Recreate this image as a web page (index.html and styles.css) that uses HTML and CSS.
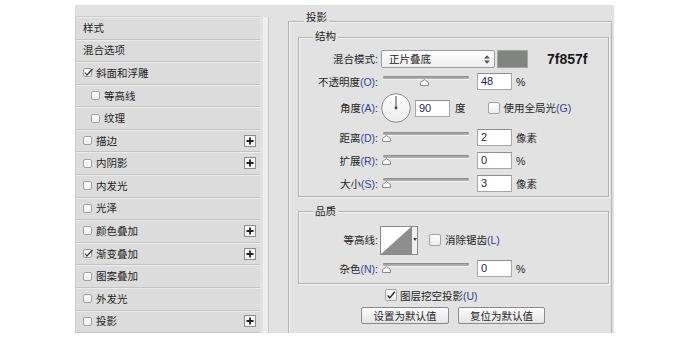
FILE: index.html
```html
<!DOCTYPE html>
<html lang="zh">
<head>
<meta charset="utf-8">
<title>图层样式 - 投影</title>
<link rel="stylesheet" href="styles.css">
</head>
<body>
<div class="dialog">
  <div class="side">
    <ul class="list">
      <li class="row">样式</li>
      <li class="row">混合选项</li>
      <li class="row"><svg class="cbs" width="11" height="10" viewBox="0 0 11 10"><rect x="0.5" y="0.5" width="8" height="8" rx="1.5" fill="#fff" stroke="#9a9a9a"/><path d="M2 4.5 L4 7 L9.5 1" fill="none" stroke="#333" stroke-width="1.2"/></svg>斜面和浮雕</li>
      <li class="row sub"><span class="cb"></span>等高线</li>
      <li class="row sub"><span class="cb"></span>纹理</li>
      <li class="row"><span class="cb"></span>描边<span class="plus"><svg width="8" height="8" viewBox="0 0 8 8"><path d="M4 0.5v7M0.5 4h7" stroke="#222" stroke-width="1.8"/></svg></span></li>
      <li class="row"><span class="cb"></span>内阴影<span class="plus"><svg width="8" height="8" viewBox="0 0 8 8"><path d="M4 0.5v7M0.5 4h7" stroke="#222" stroke-width="1.8"/></svg></span></li>
      <li class="row"><span class="cb"></span>内发光</li>
      <li class="row"><span class="cb"></span>光泽</li>
      <li class="row"><span class="cb"></span>颜色叠加<span class="plus"><svg width="8" height="8" viewBox="0 0 8 8"><path d="M4 0.5v7M0.5 4h7" stroke="#222" stroke-width="1.8"/></svg></span></li>
      <li class="row"><svg class="cbs" width="11" height="10" viewBox="0 0 11 10"><rect x="0.5" y="0.5" width="8" height="8" rx="1.5" fill="#fff" stroke="#9a9a9a"/><path d="M2 4.5 L4 7 L9.5 1" fill="none" stroke="#333" stroke-width="1.2"/></svg>渐变叠加<span class="plus"><svg width="8" height="8" viewBox="0 0 8 8"><path d="M4 0.5v7M0.5 4h7" stroke="#222" stroke-width="1.8"/></svg></span></li>
      <li class="row"><span class="cb"></span>图案叠加</li>
      <li class="row"><span class="cb"></span>外发光</li>
      <li class="row"><span class="cb"></span>投影<span class="plus"><svg width="8" height="8" viewBox="0 0 8 8"><path d="M4 0.5v7M0.5 4h7" stroke="#222" stroke-width="1.8"/></svg></span></li>
    </ul>
    <div class="track"></div>
  </div>

  <div class="main">
    <div class="outer">
      <div class="legend">投影</div>

      <div class="box struct">
        <div class="legend">结构</div>

        <div class="frow r1">
          <span class="lbl">混合模式:</span>
          <div class="select"><span>正片叠底</span><svg width="6" height="9" viewBox="0 0 6 9"><path d="M0 3.6 L3 0.3 L6 3.6Z M0 5.4 L3 8.7 L6 5.4Z" fill="#555"/></svg></div>
          <span class="swatch"></span>
          <span class="hex">7f857f</span>
        </div>

        <div class="frow r2">
          <span class="lbl">不透明度<span class="key">(O)</span>:</span>
          <div class="slider"><span class="bar"></span><svg class="thumb" style="left:37px" width="9" height="7" viewBox="0 0 9 7"><path d="M0.5 6.5 V3.5 L4.5 0.6 L8.5 3.5 V6.5Z" fill="#fafafa" stroke="#8a8a8a"/></svg></div>
          <span class="input">48</span>
          <span class="unit">%</span>
        </div>

        <div class="frow r3">
          <span class="lbl">角度<span class="key">(A)</span>:</span>
          <svg class="dial" width="30" height="30" viewBox="0 0 30 30"><defs><linearGradient id="dg" x1="0" y1="0" x2="0" y2="1"><stop offset="0" stop-color="#ffffff"/><stop offset="1" stop-color="#ececec"/></linearGradient></defs><circle cx="15" cy="15" r="14.3" fill="url(#dg)" stroke="#8c8c8c"/><path d="M15 15 V3" stroke="#444" stroke-width="1"/><circle cx="15" cy="15" r="1.4" fill="#444"/></svg>
          <span class="input deginput">90</span>
          <span class="deg">度</span>
          <span class="check gl"></span>
          <span class="ctext">使用全局光<span class="key">(G)</span></span>
        </div>

        <div class="frow">
          <span class="lbl">距离<span class="key">(D)</span>:</span>
          <div class="slider"><span class="bar"></span><svg class="thumb" style="left:-1px" width="9" height="7" viewBox="0 0 9 7"><path d="M0.5 6.5 V3.5 L4.5 0.6 L8.5 3.5 V6.5Z" fill="#fafafa" stroke="#8a8a8a"/></svg></div>
          <span class="input">2</span>
          <span class="unit">像素</span>
        </div>

        <div class="frow">
          <span class="lbl">扩展<span class="key">(R)</span>:</span>
          <div class="slider"><span class="bar"></span><svg class="thumb" style="left:-1px" width="9" height="7" viewBox="0 0 9 7"><path d="M0.5 6.5 V3.5 L4.5 0.6 L8.5 3.5 V6.5Z" fill="#fafafa" stroke="#8a8a8a"/></svg></div>
          <span class="input">0</span>
          <span class="unit">%</span>
        </div>

        <div class="frow">
          <span class="lbl">大小<span class="key">(S)</span>:</span>
          <div class="slider"><span class="bar"></span><svg class="thumb" style="left:-1px" width="9" height="7" viewBox="0 0 9 7"><path d="M0.5 6.5 V3.5 L4.5 0.6 L8.5 3.5 V6.5Z" fill="#fafafa" stroke="#8a8a8a"/></svg></div>
          <span class="input">3</span>
          <span class="unit">像素</span>
        </div>
      </div>

      <div class="box quality">
        <div class="legend">品质</div>

        <div class="frow q1">
          <span class="lbl">等高线:</span>
          <div class="contour">
            <span class="cbox"><svg width="30" height="27" viewBox="0 0 30 27"><path d="M0 27 L30 0 V27Z" fill="#8e8e8e"/></svg></span>
            <span class="drop"><svg width="4" height="3" viewBox="0 0 4 3"><path d="M0 0 H4 L2 3Z" fill="#444"/></svg></span>
          </div>
          <span class="check aa"></span>
          <span class="ctext">消除锯齿<span class="key">(L)</span></span>
        </div>

        <div class="frow q2">
          <span class="lbl">杂色<span class="key">(N)</span>:</span>
          <div class="slider"><span class="bar"></span><svg class="thumb" style="left:-1px" width="9" height="7" viewBox="0 0 9 7"><path d="M0.5 6.5 V3.5 L4.5 0.6 L8.5 3.5 V6.5Z" fill="#fafafa" stroke="#8a8a8a"/></svg></div>
          <span class="input">0</span>
          <span class="unit">%</span>
        </div>
      </div>

      <div class="knock">
        <span class="check on"><svg width="12" height="11" viewBox="0 0 12 11"><path d="M2 5.5 L4.5 8.5 L10.5 1" fill="none" stroke="#222" stroke-width="1.6"/></svg></span>
        <span class="ctext">图层挖空投影<span class="key">(U)</span></span>
      </div>

      <div class="btns">
        <span class="btn b1">设置为默认值</span>
        <span class="btn b2">复位为默认值</span>
      </div>
    </div>
  </div>
</div>
</body>
</html>
```

FILE: styles.css
```css
* { box-sizing: border-box; }

body {
  margin: 0;
  background: #ffffff;
  font-family: "Liberation Sans", "Noto Sans CJK SC", sans-serif;
  font-size: 10.5px;
  color: #1e1e1e;
}

.dialog {
  margin: 5px 0 0 75px;
  width: 539px;
  height: 328px;
  background: #e2e2e2;
  display: flex;
}

/* ---------- left style list ---------- */
.side {
  width: 195px;
  flex: none;
  display: flex;
  padding-top: 11px;
}

.list {
  list-style: none;
  margin: 0;
  padding: 0;
  width: 185px;
  display: flex;
  flex-direction: column;
  border-top: 1px solid #cdcdcd;
  border-left: 1px solid #cdcdcd;
}

.row {
  flex: 1;
  display: flex;
  align-items: center;
  padding-left: 7px;
  background: #dcdcdc;
  border-bottom: 1px solid #c4c4c4;
  box-shadow: inset 0 1px 0 #ececec;
  line-height: 14px;
}

.row.sub { padding-left: 15px; }

.cb {
  width: 9px;
  height: 9px;
  flex: none;
  border: 1px solid #a2a2a2;
  border-radius: 2px;
  background: linear-gradient(#ffffff, #efefef);
  margin-right: 4px;
}

.cbs {
  flex: none;
  margin-right: 2px;
}

.plus {
  margin-left: auto;
  margin-right: 4px;
  width: 12px;
  height: 12px;
  border: 1px solid #8c8c8c;
  background: #f6f6f6;
  display: flex;
  align-items: center;
  justify-content: center;
}

.track {
  width: 6px;
  margin-left: 3px;
  margin-top: 1px;
  background: #eeeeee;
  border-right: 1px solid #c6c6c6;
}

/* ---------- right settings ---------- */
.main {
  flex: 1;
  display: flex;
  padding: 16px 0 0 18px;
}

.outer {
  width: 324px;
  border: 1px solid #b2b2b2;
  border-bottom: none;
  box-shadow: inset 1px 1px 0 #f3f3f3;
}

.legend {
  width: max-content;
  line-height: 14px;
  background: #e2e2e2;
  padding: 0 2px;
}

.outer > .legend { margin: -12px 0 0 15px; }

.box {
  border: 1px solid #b2b2b2;
  box-shadow: inset 1px 1px 0 #f3f3f3, 1px 1px 0 #f3f3f3;
  margin: 13px 2px 0 9px;
}

.struct { padding-bottom: 4px; }
.struct > .legend { margin: -9px 0 0 14px; }

.quality { margin-top: 14px; padding-bottom: 6px; }
.quality > .legend { margin: -8px 0 0 14px; }

.frow {
  display: flex;
  align-items: center;
  height: 17px;
  margin-top: 6px;
  line-height: 14px;
}

.frow.r1 { height: 18px; margin-top: 7px; }
.frow.r2 { margin-top: 5px; }
.frow.r3 { height: 30px; margin-top: 3px; }
.frow.q1 { height: 30px; margin-top: 7px; }
.frow.q2 { margin-top: 5px; }

.lbl {
  width: 79px;
  flex: none;
  text-align: right;
}

.key { color: #33409a; }

.select {
  margin-left: 3px;
  width: 114px;
  height: 18px;
  flex: none;
  border: 1px solid #9a9a9a;
  border-radius: 2px;
  background: linear-gradient(#ffffff, #eeeeee);
  display: flex;
  align-items: center;
  justify-content: space-between;
  padding: 0 4px 0 7px;
}

.swatch {
  margin-left: 2px;
  width: 31px;
  height: 18px;
  flex: none;
  background: #7f857f;
  border: 1px solid #a4a4a4;
}

.hex {
  margin-left: 19px;
  font: bold 14px "Liberation Sans", sans-serif;
  color: #1a1a1a;
}

.slider {
  position: relative;
  margin-left: 5px;
  width: 86px;
  height: 17px;
  flex: none;
}

.slider .bar {
  position: absolute;
  left: 0;
  right: 0;
  top: 3px;
  height: 3px;
  border-radius: 2px;
  background: #aaaaaa;
  box-shadow: inset 0 1px 0 #8c8c8c, 0 1px 0 #f4f4f4;
}

.slider .thumb {
  position: absolute;
  top: 6px;
}

.input {
  margin-left: 8px;
  width: 35px;
  height: 17px;
  flex: none;
  background: #ffffff;
  border: 1px solid #a8a8a8;
  border-top-color: #8e8e8e;
  padding-left: 3px;
  font: 11px/15px "Liberation Sans", sans-serif;
  color: #24245a;
}

.unit { margin-left: 4px; }

.dial { margin-left: 3px; flex: none; }

.deginput { margin-left: 4px; }

.deg { margin-left: 5px; }

.check {
  width: 12px;
  height: 12px;
  flex: none;
  border: 1px solid #a3a3a3;
  border-radius: 2px;
  background: linear-gradient(#ffffff, #ececec);
  display: flex;
  align-items: center;
  justify-content: center;
}

.check.gl { margin-left: 22px; }
.check.aa { margin-left: 11px; }

.ctext { margin-left: 4px; }

.contour {
  margin-left: 2px;
  display: flex;
  flex: none;
}

.cbox {
  width: 32px;
  height: 29px;
  border: 1px solid #8a8a8a;
  background: #ffffff;
  display: flex;
}

.drop {
  width: 6px;
  height: 29px;
  border: 1px solid #8a8a8a;
  border-left: none;
  background: #efefef;
  display: flex;
  justify-content: center;
  padding-top: 11px;
}

.knock {
  display: flex;
  align-items: center;
  height: 14px;
  margin: 4px 0 0 96px;
}

.knock .ctext { margin-left: 3px; }

.btns {
  display: flex;
  gap: 9px;
  margin: 5px 0 0 72px;
}

.btn {
  height: 17px;
  border: 1px solid #8a8a8a;
  border-radius: 2px;
  background: linear-gradient(#fdfdfd, #e4e4e4);
  display: flex;
  align-items: center;
  justify-content: center;
  line-height: 14px;
}

.b1 { width: 88px; }
.b2 { width: 87px; }
```
